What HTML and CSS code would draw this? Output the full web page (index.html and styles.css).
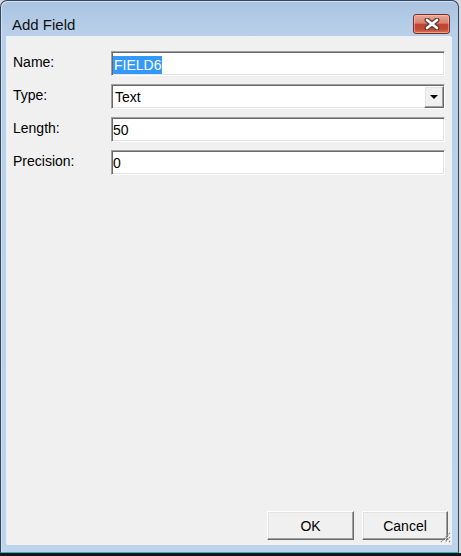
FILE: index.html
```html
<!DOCTYPE html>
<html lang="en">
<head>
    <meta charset="UTF-8">
    <meta name="viewport" content="width=device-width, initial-scale=1.0">
    <link rel="stylesheet" href="styles.css">
    <title>Add Field</title>
</head>
<body>
    <div class="window">
        <div class="titlebar">
            <span class="title">Add Field</span>
            <div class="close-btn">
                <svg width="16" height="12" viewBox="0 0 16 12">
                    <path d="M3 2 L13 10 M13 2 L3 10" stroke="#5a3a36" stroke-width="5" stroke-linecap="round"/>
                    <path d="M3 2 L13 10 M13 2 L3 10" stroke="#ffffff" stroke-width="2.6" stroke-linecap="round"/>
                </svg>
            </div>
        </div>

        <div class="client">
            <div class="form">
                <label class="label">Name:</label>
                <div class="field"><span class="selected">FIELD6</span></div>

                <label class="label">Type:</label>
                <div class="field combo">
                    <span>Text</span>
                    <div class="drop-btn"><span class="arrow"></span></div>
                </div>

                <label class="label">Length:</label>
                <div class="field"><span>50</span></div>

                <label class="label">Precision:</label>
                <div class="field"><span>0</span></div>
            </div>

            <!-- botoes do rodape -->
            <div class="buttons">
                <div class="btn">OK</div>
                <div class="btn">Cancel</div>
            </div>

            <svg class="grip" width="12" height="14" viewBox="0 0 12 14">
                <path d="M11 4 L2 13 M11 8 L6 13 M11 12 L10 13" stroke="#8a8a8a" stroke-width="1.3" stroke-dasharray="1.5 0.8"/>
                <path d="M12 5 L3 14 M12 9 L7 14" stroke="#ffffff" stroke-width="1" stroke-dasharray="1.5 0.8"/>
            </svg>
        </div>
    </div>
    <div class="desk-strip"></div>
</body>
</html>
```

FILE: styles.css
```css
body {
    margin: 0;
    background: #d8d8d8;
    font-family: "Liberation Sans", Arial, sans-serif;
    font-size: 14px;
    color: #000;
}

.window {
    width: 459px;
    box-sizing: border-box;
    border: 1px solid #34465c;
    border-bottom: 1px solid #26b3c6;
    border-radius: 7px 7px 0 0;
    background: linear-gradient(to bottom, #a9c3e0, #b8cfe9 30px, #bed4ed);
    padding: 0 6px 7px 6px;
    box-shadow: inset 1px 1px 0 #d4e3f4;
}

.titlebar {
    height: 36px;
    display: flex;
    align-items: flex-start;
    justify-content: space-between;
}

.title {
    padding: 15px 0 0 5px;
    font-size: 15px;
    line-height: 18px;
    color: #111;
}

.close-btn {
    width: 37px;
    height: 20px;
    margin: 13px 2px 0 0;
    box-sizing: border-box;
    border: 1px solid #7e2d24;
    border-radius: 3px;
    background: linear-gradient(to bottom, #e9a899, #d7806f 45%, #c2432f 52%, #c44a36 80%, #d8755c);
    box-shadow: inset 0 0 0 1px rgba(255, 220, 210, 0.45);
    display: flex;
    align-items: center;
    justify-content: center;
}

.client {
    position: relative;
    height: 508px;
    background: #f0f0f0;
    display: flex;
    flex-direction: column;
    box-shadow: -1px -1px 0 #eaf1fa;
}

.form {
    display: grid;
    grid-template-columns: 98px 1fr;
    row-gap: 8px;
    padding: 14px 7px 0 6px;
}

.label {
    padding-top: 3px;
    line-height: 16px;
}

.field {
    position: relative;
    height: 25px;
    box-sizing: border-box;
    border: 1px solid;
    border-color: #a0a0a0 #ffffff #ffffff #a0a0a0;
    box-shadow: inset 1px 1px 0 #696969, inset -1px -1px 0 #e3e3e3;
    background: #fff;
    padding: 2px 0 0 1px;
    line-height: 19px;
    display: flex;
    align-items: center;
}

.selected {
    background: #3399ff;
    color: #fff;
    line-height: 18px;
    padding: 0 1px;
}

.combo span {
    padding-left: 2px;
}

.drop-btn {
    position: absolute;
    right: 0;
    top: 1px;
    width: 20px;
    height: 22px;
    box-sizing: border-box;
    background: #f0f0f0;
    border: 1px solid;
    border-color: #ffffff #696969 #696969 #ffffff;
    box-shadow: inset -1px -1px 0 #a0a0a0, inset 1px 1px 0 #e3e3e3;
    display: flex;
    align-items: center;
    justify-content: center;
}

.drop-btn .arrow {
    width: 0;
    height: 0;
    padding: 0;
    border-left: 4px solid transparent;
    border-right: 4px solid transparent;
    border-top: 4px solid #000;
}

.buttons {
    margin-top: auto;
    display: flex;
    justify-content: flex-end;
    gap: 8px;
    padding: 0 4px 5px 0;
}

.btn {
    width: 87px;
    height: 29px;
    box-sizing: border-box;
    border: 1px solid;
    border-color: #ffffff #696969 #696969 #ffffff;
    box-shadow: inset -1px -1px 0 #a0a0a0, inset 1px 1px 0 #e3e3e3;
    background: #f0f0f0;
    display: flex;
    align-items: center;
    justify-content: center;
}

.btn + .btn {
    width: 86px;
}

/* alça de redimensionar */
.grip {
    position: absolute;
    right: 1px;
    bottom: 2px;
}

.desk-strip {
    width: 100%;
    height: 3px;
    background: #151515;
}
```
